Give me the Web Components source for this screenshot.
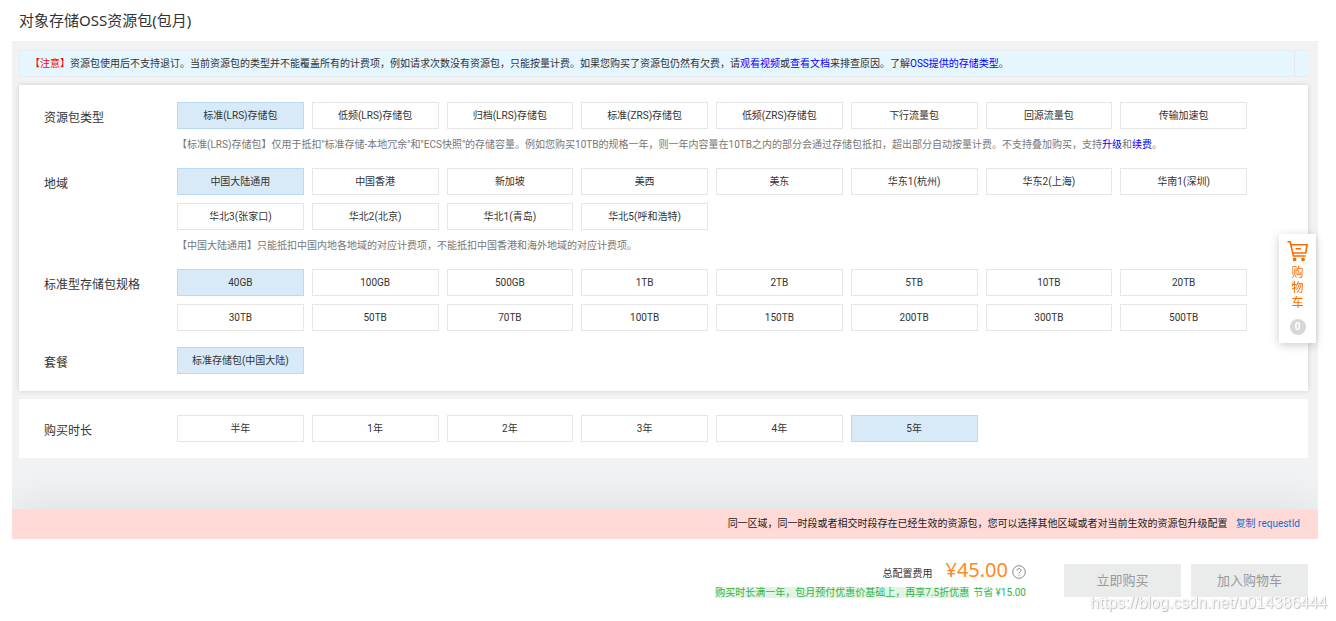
<!DOCTYPE html>
<html lang="zh-CN">
<head>
<meta charset="utf-8">
<meta name="viewport" content="width=device-width, initial-scale=1">
<title>对象存储OSS资源包(包月)</title>
<style>
  body { margin: 0; background: #fff; color: #333; font: 10px/16px Roboto, "Noto Sans CJK SC", sans-serif; }
  a { color: #00f; text-decoration: none; }
  .warn { color: #f00; }
</style>
</head>
<body>
<oss-page>
  <page-title slot="title">对象存储OSS资源包(包月)</page-title>
  <notice-bar><span class="warn">【注意】</span>资源包使用后不支持退订。当前资源包的类型并不能覆盖所有的计费项，例如请求次数没有资源包，只能按量计费。如果您购买了资源包仍然有欠费，请<a href="#video">观看视频</a>或<a href="#docs">查看文档</a>来排查原因。了解<a href="#classes">OSS提供的存储类型</a>。</notice-bar>
  <config-card raised>
    <option-row label="资源包类型" selected="0" options="标准(LRS)存储包|低频(LRS)存储包|归档(LRS)存储包|标准(ZRS)存储包|低频(ZRS)存储包|下行流量包|回源流量包|传输加速包"><span slot="hint">【标准(LRS)存储包】仅用于抵扣"标准存储-本地冗余"和"ECS快照"的存储容量。例如您购买10TB的规格一年，则一年内容量在10TB之内的部分会通过存储包抵扣，超出部分自动按量计费。不支持叠加购买，支持<a href="#upgrade">升级</a>和<a href="#renew">续费</a>。</span></option-row>
    <option-row label="地域" selected="0" options="中国大陆通用|中国香港|新加坡|美西|美东|华东1(杭州)|华东2(上海)|华南1(深圳)|华北3(张家口)|华北2(北京)|华北1(青岛)|华北5(呼和浩特)"><span slot="hint">【中国大陆通用】只能抵扣中国内地各地域的对应计费项，不能抵扣中国香港和海外地域的对应计费项。</span></option-row>
    <option-row label="标准型存储包规格" selected="0" options="40GB|100GB|500GB|1TB|2TB|5TB|10TB|20TB|30TB|50TB|70TB|100TB|150TB|200TB|300TB|500TB"></option-row>
    <option-row label="套餐" selected="0" options="标准存储包(中国大陆)"></option-row>
  </config-card>
  <config-card>
    <option-row label="购买时长" selected="5" options="半年|1年|2年|3年|4年|5年"></option-row>
  </config-card>
  <order-footer slot="footer"></order-footer>
</oss-page>
<cart-tab count="0"></cart-tab>
<water-mark>https://blog.csdn.net/u014386444</water-mark>

<script>
  const define = (name, html, setup) => {
    const tpl = document.createElement('template');
    tpl.innerHTML = html;
    customElements.define(name, class extends HTMLElement {
      constructor() {
        super();
        this.attachShadow({ mode: 'open' }).append(tpl.content.cloneNode(true));
      }
      connectedCallback() {
        if (setup && !this.ready) { this.ready = true; setup(this, this.shadowRoot); }
      }
    });
  };

  define('page-title', `
    <style>
      :host { display: block; padding: 0 19px; }
      h1 { margin: 0; font-family: "Noto Sans", "Noto Sans CJK SC", sans-serif; font-size: 15px; font-weight: 400; line-height: 41px; }
    </style>
    <h1><slot></slot></h1>`);

  define('oss-page', `
    <style>
      :host { display: block; }
      main { display: flex; flex-direction: column; gap: 8px; margin: 0 18px 0 12px; padding: 9px 10px 51px 7px; background: #f0f2f4; }
    </style>
    <slot name="title"></slot>
    <main><slot></slot></main>
    <slot name="footer"></slot>`);

  define('notice-bar', `
    <style>
      :host { display: flex; box-sizing: border-box; border: 1px solid #e8ecee; border-right: 0; background: #e5f6ff; }
      p { flex: 1; margin: 0; padding: 4px 10px; line-height: 17px; }
      i { width: 13px; border-left: 1px solid #e4e8ea; }
    </style>
    <p><slot></slot></p><i></i>`);

  define('config-card', `
    <style>
      :host { display: flex; flex-direction: column; gap: 16px; padding: 16px 61px 16px 25px; background: #fff; }
      :host([raised]) { padding-top: 17px; padding-bottom: 17px; box-shadow: 0 0 5px rgba(0, 0, 0, .14); }
    </style>
    <slot></slot>`);

  define('option-row', `
    <style>
      :host { display: grid; grid-template-columns: 133px 1fr; }
      h2 { margin: 0; padding-top: 6px; font-size: 12px; font-weight: 400; line-height: 21px; }
      [role=group] { display: grid; grid-template-columns: repeat(8, 1fr); gap: 8px; }
      button { height: 27px; padding: 1px 0 0; border: 1px solid #e6e6e6; border-radius: 0; background: #fff; color: #333; font: inherit; white-space: nowrap; cursor: pointer; }
      button[aria-pressed=true] { border-color: #b9daf4; background: #d8eaf8; }
      ::slotted([slot=hint]) { display: block; margin-top: 8px; line-height: 15px; color: #777; }
    </style>
    <h2 id="label"></h2>
    <div><div role="group" aria-labelledby="label"></div><slot name="hint"></slot></div>`,
    (host, root) => {
      root.querySelector('h2').textContent = host.getAttribute('label');
      const group = root.querySelector('[role=group]');
      const selected = Number(host.getAttribute('selected'));
      host.getAttribute('options').split('|').forEach((text, i) => {
        const b = document.createElement('button');
        b.type = 'button';
        b.textContent = text;
        b.setAttribute('aria-pressed', i === selected);
        b.addEventListener('click', () => {
          for (const other of group.children) other.setAttribute('aria-pressed', other === b);
        });
        group.append(b);
      });
    });

  define('order-footer', `
    <style>
      :host { display: block; }
      .error { display: flex; justify-content: flex-end; gap: 8px; margin: 0 18px 0 12px; padding: 7px 18px; background: #ffdad7; color: #222; box-shadow: 0 -4px 40px rgba(0, 0, 0, .09); clip-path: inset(-60px 0 0 0); }
      .error a { color: #0b73d0; text-decoration: none; }
      .bar { display: flex; justify-content: flex-end; align-items: flex-start; padding: 19px 28px 24px; }
      .cost { margin-right: 38px; text-align: right; }
      .total { display: flex; align-items: baseline; justify-content: flex-end; line-height: 24px; }
      .price { margin: 0 4px 0 13px; font-family: "Noto Sans", sans-serif; font-size: 20px; color: #ff8a1c; }
      .total svg { width: 14px; height: 14px; align-self: center; }
      .save { color: #35b34a; line-height: 14px; }
      mark { background: #e2f5e3; color: inherit; }
      .save span { margin-left: 4px; }
      .actions { display: flex; gap: 10px; padding-top: 6px; }
      button { width: 117px; height: 33px; padding: 0; border: 0; background: #eaecec; color: #999; font: inherit; font-size: 13px; }
    </style>
    <div class="error"><span>同一区域，同一时段或者相交时段存在已经生效的资源包，您可以选择其他区域或者对当前生效的资源包升级配置</span><a href="#copy">复制 requestId</a></div>
    <div class="bar">
      <div class="cost">
        <div class="total"><span>总配置费用</span><span class="price">¥45.00</span>
          <svg viewBox="0 0 14 14" fill="none" stroke="#888" stroke-width="1" aria-label="说明"><circle cx="7" cy="7" r="6.3"/><path d="M5 5.6C5 4.3 5.8 3.6 7 3.6s2 .7 2 1.8c0 1.5-2 1.5-2 3.1M7 9.7v1.1"/></svg>
        </div>
        <div class="save"><mark>购买时长满一年，包月预付优惠价基础上，再享7.5折优惠</mark><span>节省 ¥15.00</span></div>
      </div>
      <div class="actions"><button type="button" disabled>立即购买</button><button type="button" disabled>加入购物车</button></div>
    </div>`);

  define('cart-tab', `
    <style>
      :host { position: fixed; top: 234px; right: 20px; width: 37px; background: #fff; box-shadow: 0 2px 9px rgba(0, 0, 0, .2); }
      a { display: flex; flex-direction: column; align-items: center; padding: 6px 0 8px; color: #ff6a00; text-decoration: none; font-size: 12px; line-height: 15px; }
      svg { width: 22px; height: 22px; margin-bottom: 4px; }
      span { width: 12px; word-break: break-all; }
      b { width: 16px; height: 16px; margin-top: 8px; border-radius: 50%; background: #d5d7d8; color: #fff; font-size: 10px; line-height: 16px; text-align: center; }
    </style>
    <a href="#cart">
      <svg viewBox="0 0 22 22" fill="none" stroke="#ff6a00" stroke-width="1.6"><path d="M.5 1.8h2.6l3.3 14.2h12.4M4 4.8h16l-1.3 8.2H6M8.6 8.8h5.4"/><circle cx="7.6" cy="19.4" r="1.1" fill="#ff6a00"/><circle cx="16" cy="19.4" r="1.1" fill="#ff6a00"/></svg>
      <span>购物车</span><b></b>
    </a>`,
    (host, root) => { root.querySelector('b').textContent = host.getAttribute('count'); });

  define('water-mark', `
    <style>
      :host { position: fixed; right: 9px; bottom: 8px; color: rgba(255, 255, 255, .9); font: 16px/20px "Liberation Sans", sans-serif; text-shadow: 0 0 1px #ccc, 1px 1px 1px #bbb; pointer-events: none; }
    </style>
    <slot></slot>`);
</script>
</body>
</html>
